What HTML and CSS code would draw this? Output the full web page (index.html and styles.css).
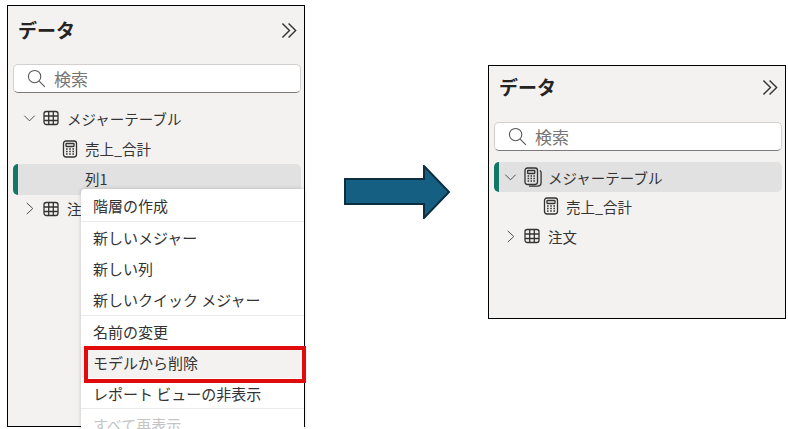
FILE: index.html
```html
<!doctype html>
<html lang="ja">
<head>
  <meta charset="utf-8"/>
  <title>データ</title>
  <link rel="stylesheet" href="styles.css">
</head>
<body>
  <svg class="sprites" width="0" height="0">
    <symbol id="icon-table" viewBox="0 0 16 16">
      <rect x="1" y="1.500" width="14" height="13" rx="2.200"/>
      <path d="M1 6h14M1 10.500h14M5.700 1.500v13M10.300 1.500v13"/>
    </symbol>
    <symbol id="icon-calc" viewBox="0 0 16 18">
      <rect x="1.500" y="1" width="13" height="16" rx="2.400"/>
      <rect x="4" y="3.500" width="8" height="3" rx=".5"/>
      <path class="keys" d="M4 9h1.600M7.200 9h1.600M10.400 9h1.600M4 11.500h1.600M7.200 11.500h1.600M10.400 11.500h1.600M4 14h1.600M7.200 14h1.600M10.400 14h1.600"/>
    </symbol>
    <symbol id="icon-calcs" viewBox="0 0 18 20">
      <rect x="1" y="1" width="12.500" height="16.500" rx="2.400"/>
      <rect x="3.600" y="3.500" width="7.200" height="3" rx=".5"/>
      <path class="keys" d="M3.600 9h1.500M6.500 9h1.500M9.400 9h1.500M3.600 11.500h1.500M6.500 11.500h1.500M9.400 11.500h1.500M3.600 14h1.500M6.500 14h1.500M9.400 14h1.500"/>
      <path d="M15.800 3.500c.8.400 1.300 1.200 1.300 2.200v9.800c0 2.200-1.600 3.700-3.800 3.700H5"/>
    </symbol>
    <symbol id="icon-down" viewBox="0 0 16 16"><path d="M2.500 5 8 10.500 13.500 5"/></symbol>
    <symbol id="icon-right" viewBox="0 0 16 16"><path d="M5 2l6.500 6L5 14"/></symbol>
    <symbol id="icon-collapse" viewBox="0 0 18 18"><path d="M1.500 1.500 9 9l-7.500 7.500M8 1.500 15.500 9 8 16.500"/></symbol>
    <symbol id="icon-search" viewBox="0 0 20 20"><circle cx="8" cy="8" r="6.500"/><path d="m12.800 12.800 6 6"/></symbol>
  </svg>

  <main class="page">
    <section class="panel panel-before">
      <div class="panel-clip">
        <header class="panel-head">
          <h2>データ</h2>
          <svg class="ico ico-collapse"><use href="#icon-collapse"/></svg>
        </header>
        <div class="search">
          <svg class="ico ico-search"><use href="#icon-search"/></svg>
          <span>検索</span>
        </div>
        <ul class="tree">
          <li class="row">
            <svg class="ico ico-twist"><use href="#icon-down"/></svg>
            <svg class="ico ico-type"><use href="#icon-table"/></svg>
            <span>メジャーテーブル</span>
          </li>
          <li class="row row-child">
            <svg class="ico ico-calc"><use href="#icon-calc"/></svg>
            <span>売上_合計</span>
          </li>
          <li class="row row-column row-active"><span>列1</span></li>
          <li class="row">
            <svg class="ico ico-twist"><use href="#icon-right"/></svg>
            <svg class="ico ico-type"><use href="#icon-table"/></svg>
            <span>注文</span>
          </li>
        </ul>
        <ul class="menu">
          <li class="menu-item menu-first menu-end">階層の作成</li>
          <li class="menu-item">新しいメジャー</li>
          <li class="menu-item">新しい列</li>
          <li class="menu-item menu-end">新しいクイック メジャー</li>
          <li class="menu-item">名前の変更</li>
          <li class="menu-item menu-hover">モデルから削除</li>
          <li class="menu-item menu-end">レポート ビューの非表示</li>
          <li class="menu-item menu-muted">すべて再表示</li>
        </ul>
      </div>
      <div class="callout"></div>
    </section>

    <svg class="arrow" width="108" height="54" viewBox="0 0 108 54">
      <path d="M1 14h79V1l25 26-25 26V39H1z"/>
    </svg>

    <section class="panel panel-after">
      <div class="panel-clip">
        <header class="panel-head">
          <h2>データ</h2>
          <svg class="ico ico-collapse"><use href="#icon-collapse"/></svg>
        </header>
        <div class="search">
          <svg class="ico ico-search"><use href="#icon-search"/></svg>
          <span>検索</span>
        </div>
        <ul class="tree">
          <li class="row row-active">
            <svg class="ico ico-twist"><use href="#icon-down"/></svg>
            <svg class="ico ico-type ico-type-calc"><use href="#icon-calcs"/></svg>
            <span>メジャーテーブル</span>
          </li>
          <li class="row row-child">
            <svg class="ico ico-calc"><use href="#icon-calc"/></svg>
            <span>売上_合計</span>
          </li>
          <li class="row">
            <svg class="ico ico-twist"><use href="#icon-right"/></svg>
            <svg class="ico ico-type"><use href="#icon-table"/></svg>
            <span>注文</span>
          </li>
        </ul>
      </div>
    </section>
  </main>
</body>
</html>
```

FILE: styles.css
```css
* { margin: 0; padding: 0; box-sizing: border-box; }
html, body { background-color: white; height: 100%; overflow: hidden; }
body { font-family: "Noto Sans CJK JP", "Noto Sans", sans-serif; color: #333; }
ul { list-style: none; }
.sprites { position: absolute; }

.page { display: flex; align-items: flex-start; padding-left: 7px; }

.panel { position: relative; width: 298px; background-color: #f3f2f1; border: 1px solid black; }
.panel-before { height: 422px; margin-top: 5px; }
.panel-after { height: 254px; margin-top: 65px; margin-left: 36px; }
.panel-clip { height: 100%; overflow: hidden; }

.panel-head { display: flex; align-items: center; justify-content: space-between; height: 48px; padding: 0 6px 0 10px; }
.panel-after .panel-head { height: 46px; }
.panel-head h2 { font-size: 19px; font-weight: 700; color: #252423; line-height: 1; margin-bottom: 2px; }
.panel-after .panel-head h2 { margin-bottom: 6px; }
.panel-after .ico-collapse { margin-bottom: 4px; }

.ico { display: block; fill: none; stroke: #333; stroke-width: 1.300; flex: none; }
.ico-collapse { width: 17px; height: 17px; stroke-width: 1.500; }
.ico-search { width: 19px; height: 19px; stroke: #555; stroke-width: 1.100; }
.ico-twist { width: 15px; height: 15px; stroke-width: 1; stroke: #444; }
.ico-type { width: 16px; height: 16px; margin-right: 2px; }
.ico-type-calc { width: 18px; height: 20px; margin-right: 0; }
.ico-calc { width: 16px; height: 18px; margin-right: 1px; }
.keys { stroke-width: 1.600; }

.search {
  display: flex; align-items: center; gap: 8px;
  height: 29px; margin: 10px 3px 0 5px; padding-left: 13px;
  background-color: white; border: 1px solid #d2d0ce; border-bottom-color: #7a7a7a; border-radius: 5px;
  font-size: 17px; color: #767676;
}

.tree { margin: 10px 3px 0 5px; }
.panel-after .tree { margin-top: 11px; }
.row {
  display: flex; align-items: center; gap: 6px;
  height: 30.500px; padding-left: 9px; border-radius: 5px;
  font-size: 14.500px;
}
.row + .row { padding-bottom: 2px; }
.panel-before .row-child { padding-bottom: 0; }
.panel-after .row { height: 30px; }
.row-child { padding-left: 49px; }
.row-active { background-color: #e1e1e1; border-left: 5px solid #117865; padding-left: 4px; }
.row-column.row-active { padding-left: 67px; }

.menu { position: absolute; top: 183px; left: 73px; right: 0; background-color: white; box-shadow: 0 0 4px rgba(0, 0, 0, .2); border-radius: 4px 0 0 0; }
.menu-item { display: flex; align-items: center; height: 31.200px; padding-left: 12px; font-size: 15px; color: #333; white-space: pre; }
.menu-first { height: 33px; }
.menu-end { border-bottom: 1px solid #ecebe9; }
.menu-hover { background-color: #f3f2f1; }
.menu-muted { color: #c4c4c4; }

.callout { position: absolute; top: 340px; left: 76px; width: 222px; height: 37px; border: 4px solid #e00b0b; }

.arrow { flex: none; margin-top: 165px; margin-left: 39px; }
.arrow path { fill: #156082; stroke: #0c2f40; stroke-width: 2; }
```
